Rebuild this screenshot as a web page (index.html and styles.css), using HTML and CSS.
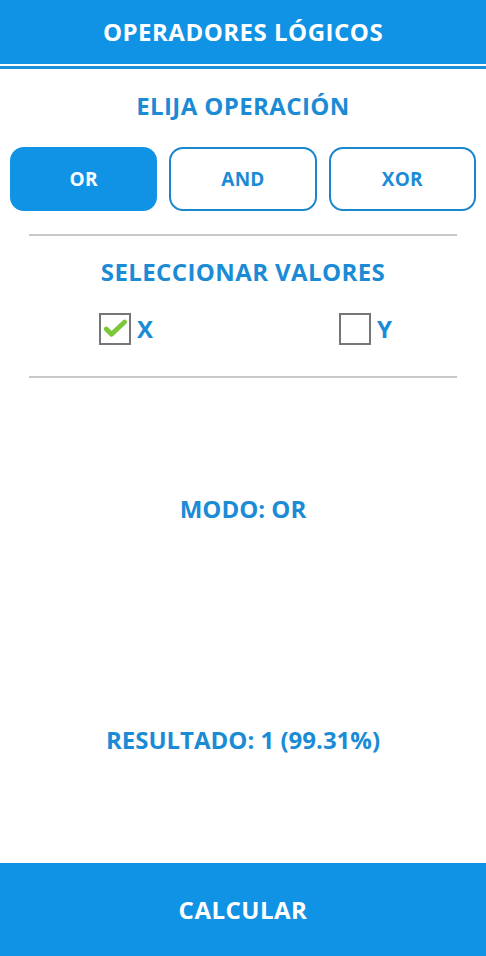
FILE: index.html
```html
<!DOCTYPE html>
<html lang="es">
  <head>
    <meta charset="utf-8" />
    <meta name="viewport" content="width=device-width, initial-scale=1" />
    <title>Operadores lógicos</title>
    <link rel="stylesheet" href="styles.css">
  </head>
  <body>
    <div class="app">
      <header class="topbar">OPERADORES LÓGICOS</header>
      <div class="topbar-rule"></div>

      <h2 class="section-title first">ELIJA OPERACIÓN</h2>

      <div class="ops">
        <button class="op active">OR</button>
        <button class="op">AND</button>
        <button class="op">XOR</button>
      </div>

      <hr class="divider" />

      <h2 class="section-title">SELECCIONAR VALORES</h2>

      <div class="values">
        <label class="value">
          <span class="box">
            <svg viewBox="0 0 32 32" width="28" height="28">
              <path d="M6 16 L12 22 L27 8" fill="none" stroke="#7cc83a" stroke-width="5.5" stroke-linecap="round" stroke-linejoin="round" />
            </svg>
          </span>
          <span class="value-name">X</span>
        </label>
        <label class="value">
          <span class="box"></span>
          <span class="value-name">Y</span>
        </label>
      </div>

      <hr class="divider second" />

      <p class="info mode">MODO: OR</p>
      <p class="info result">RESULTADO: 1 (99.31%)</p>

      <button class="calc">CALCULAR</button>
    </div>
  </body>
</html>
```

FILE: styles.css
```css
body {
  margin: 0;
  font-family: "Open Sans", Arial, sans-serif;
  background: #fff;
}
.app {
  display: flex;
  flex-direction: column;
  height: 956px;
  overflow: hidden;
}
.topbar {
  height: 64px;
  line-height: 64px;
  background: #1193e5;
  color: #fff;
  text-align: center;
  font-size: 24px;
  font-weight: 700;
  letter-spacing: 0.5px;
}
.topbar-rule {
  height: 3px;
  margin-top: 2px;
  background: #1a8fdc;
}
.section-title {
  margin: 21px 0 0;
  line-height: 30px;
  font-size: 24px;
  font-weight: 700;
  letter-spacing: 0.4px;
  text-align: center;
  color: #1b8bd6;
}
.section-title.first {
  margin-top: 22px;
}
.ops {
  display: grid;
  grid-template-columns: repeat(3, 1fr);
  gap: 12px;
  padding: 0 10px;
  margin-top: 26px;
}
.op {
  height: 64px;
  border: 2px solid #1a86cc;
  border-radius: 14px;
  background: #fff;
  color: #1b8bd6;
  font-family: inherit;
  font-size: 19px;
  font-weight: 700;
  letter-spacing: 0.3px;
}
.op.active {
  background: #1193e5;
  border-color: #1193e5;
  color: #fff;
}
.divider {
  margin: 23px 29px 0;
  height: 2px;
  border: none;
  background: #c8c8c8;
}
.divider.second {
  margin-top: 31px;
}
.values {
  display: grid;
  grid-template-columns: 240px 1fr;
  padding-left: 99px;
  margin-top: 25px;
}
.value {
  display: flex;
  align-items: center;
  gap: 6px;
}
.box {
  width: 28px;
  height: 28px;
  border: 2px solid #767676;
  display: flex;
  align-items: center;
  justify-content: center;
}
.value-name {
  font-size: 24px;
  font-weight: 700;
  color: #1b8bd6;
}
.info {
  margin: 0;
  line-height: 30px;
  text-align: center;
  font-size: 24px;
  font-weight: 700;
  color: #1b8bd6;
}
.mode {
  margin-top: 116px;
}
.result {
  margin-top: 201px;
}
.calc {
  margin-top: auto;
  height: 93px;
  border: none;
  background: #1193e5;
  color: #fff;
  font-family: inherit;
  font-size: 24px;
  font-weight: 700;
  letter-spacing: 0.5px;
}
```
